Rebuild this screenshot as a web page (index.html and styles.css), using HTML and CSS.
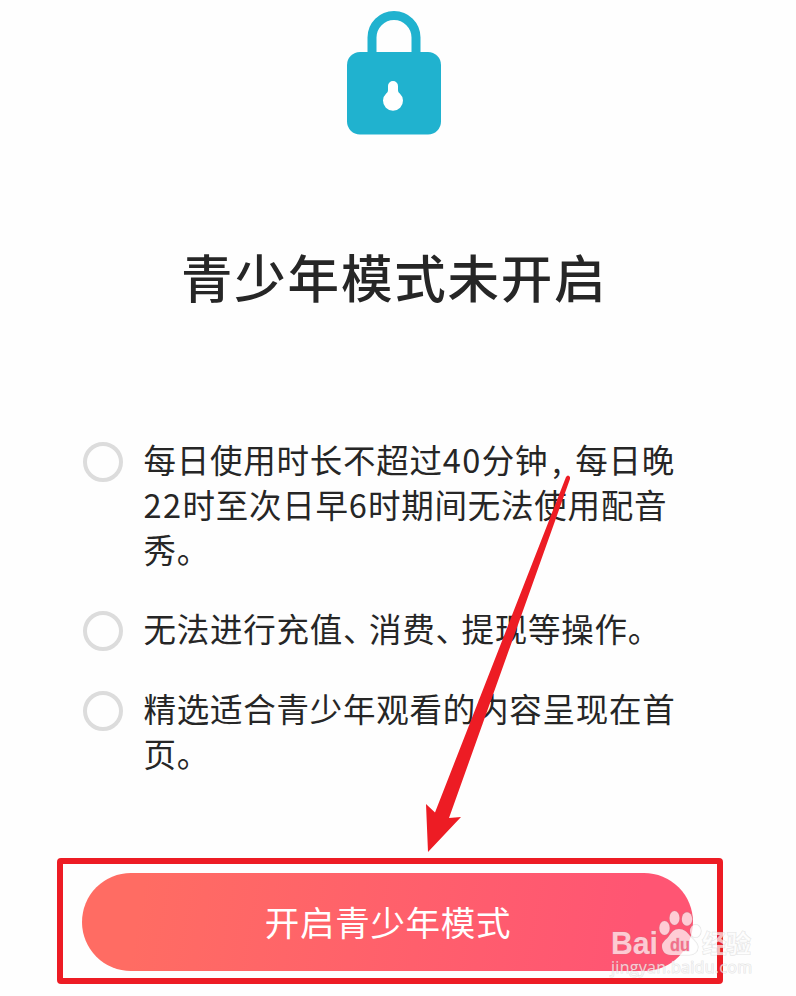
FILE: index.html
```
<!DOCTYPE html>
<html lang="zh-CN">
<head>
    <meta charset="UTF-8">
    <meta name="viewport" content="width=device-width, initial-scale=1.0">
    <title>青少年模式</title>
    <link rel="stylesheet" href="styles.css">
</head>
<body>
    <main class="page">
        <svg class="lock" width="94" height="124" viewBox="0 0 94 124">
            <path d="M25 46V26.500a22 22 0 0 1 44 0V46" fill="none" stroke="#20b2cf" stroke-width="9"/>
            <rect x="0" y="41" width="94" height="82.500" rx="13" fill="#20b2cf"/>
            <path d="M41 75a5 5 0 0 1 10 0v4c0 1.500.5 2.500 1.800 3.500a10 10 0 1 1-13.600 0c1.300-1 1.800-2 1.800-3.500z" fill="#fff"/>
        </svg>

        <h1 class="title">青少年模式未开启</h1>

        <ul class="rules">
            <li class="rule">
                <span class="circle"></span>
                <p class="rule-text">每日使用时长不超过<span class="num">40</span>分钟<span class="comma">,</span>每日晚<br><span class="num">22</span>时至次日早<span class="num">6</span>时期间无法使用配音<br>秀。</p>
            </li>
            <li class="rule">
                <span class="circle"></span>
                <p class="rule-text">无法进行充值<span class="pause">、</span>消费<span class="pause">、</span>提现等操作<span class="stop">。</span></p>
            </li>
            <li class="rule">
                <span class="circle"></span>
                <p class="rule-text">精选适合青少年观看的内容呈现在首<br>页。</p>
            </li>
        </ul>

        <div class="highlight">
            <button class="open-btn">开启青少年模式</button>
        </div>

        <!-- arrow pointing at the button -->
        <svg class="arrow" width="796" height="996" viewBox="0 0 796 996">
            <path d="M566 477Q568 474 570 477L570 479L449 818L461 817L428 852L426 804L435 812.500Z" fill="#ed1c24"/>
        </svg>

        <svg class="watermark" width="160" height="80" viewBox="600 905 160 80">
            <g class="wm-shape">
                <text class="wm-bai" x="611" y="954" textLength="47" lengthAdjust="spacingAndGlyphs">Bai</text>
                <ellipse cx="664.500" cy="928" rx="5.200" ry="7"/>
                <ellipse cx="674.500" cy="918" rx="5" ry="7"/>
                <ellipse cx="687" cy="919" rx="5.200" ry="6.800"/>
                <ellipse cx="695.500" cy="931" rx="5.500" ry="6.500"/>
                <path d="M679 929c5 0 8 3 11 7 4 4 8 7 8 11 0 5-4 8-9 8h-18c-6 0-9-4-9-9 0-4 4-6 7-10 3-4 5-7 10-7z"/>
                <text class="wm-du" x="670" y="951" textLength="20" lengthAdjust="spacingAndGlyphs">du</text>
                <text class="wm-cn" x="702" y="953">经验</text>
                <text class="wm-url" x="611" y="973" textLength="141">jingyan.baidu.com</text>
            </g>
        </svg>
    </main>
</body>
</html>
```
FILE: styles.css
```
body {
    margin: 0;
    background-color: #fefefe;
    font-family: "Noto Sans CJK SC", sans-serif;
    color: #262626;
}
.page {
    position: relative;
    box-sizing: border-box;
    width: 796px;
    height: 996px;
    padding-top: 11px;
    overflow: hidden;
}
.lock {
    display: block;
    margin-left: 347px;
}
.title {
    margin: 104px 0 0 181px;
    font-size: 51.500px;
    font-weight: 500;
    line-height: 74px;
    letter-spacing: 1.8px;
    white-space: nowrap;
}
.rules {
    display: flex;
    flex-direction: column;
    gap: 35px;
    margin: 124px 0 0 83px;
    padding: 0;
    list-style: none;
}
.rule {
    display: flex;
    gap: 20.500px;
}
.circle {
    box-sizing: border-box;
    flex: none;
    width: 40px;
    height: 40px;
    margin-top: 5px;
    border: 4px solid #dcdcdc;
    border-radius: 50%;
}
.rule-text {
    margin: 0;
    font-size: 32.500px;
    line-height: 44.8px;
    letter-spacing: 0.75px;
    white-space: nowrap;
}
.num {
    letter-spacing: 1.4px;
}
.comma {
    display: inline-block;
    box-sizing: border-box;
    width: 27px;
    padding-left: 4px;
}
.pause,
.stop {
    font-feature-settings: "halt";
}
.pause {
    margin-right: 9px;
}
.highlight {
    box-sizing: border-box;
    display: flex;
    width: 666px;
    height: 126px;
    margin: 82px 0 0 57px;
    padding: 9.500px 0 0 19px;
    border: 6px solid #ed1c24;
    border-radius: 4px;
}
.open-btn {
    width: 611px;
    height: 98px;
    padding: 0 0 2px 1px;
    border: none;
    border-radius: 49px;
    background: linear-gradient(100deg, #ff6c63 10%, #ff5573 90%);
    color: #fff;
    font-family: inherit;
    font-size: 34.500px;
    letter-spacing: 0.7px;
}
.arrow {
    position: absolute;
    top: 0;
    left: 0;
    pointer-events: none;
}
.watermark {
    position: absolute;
    top: 905px;
    left: 600px;
}
.wm-shape {
    fill: rgba(255, 255, 255, 0.7);
    stroke: rgba(150, 150, 150, 0.25);
    stroke-width: 1.2px;
    paint-order: stroke;
}
.wm-bai {
    font-family: "Liberation Sans", sans-serif;
    font-size: 32px;
    font-weight: bold;
}
.wm-du {
    fill: #f2708a;
    font-family: "Liberation Sans", sans-serif;
    font-size: 19px;
    font-weight: bold;
}
.wm-cn {
    font-family: "Noto Sans CJK SC", sans-serif;
    font-size: 24.500px;
    font-weight: bold;
}
.wm-url {
    font-family: "Open Sans", sans-serif;
    font-size: 16px;
}
```
